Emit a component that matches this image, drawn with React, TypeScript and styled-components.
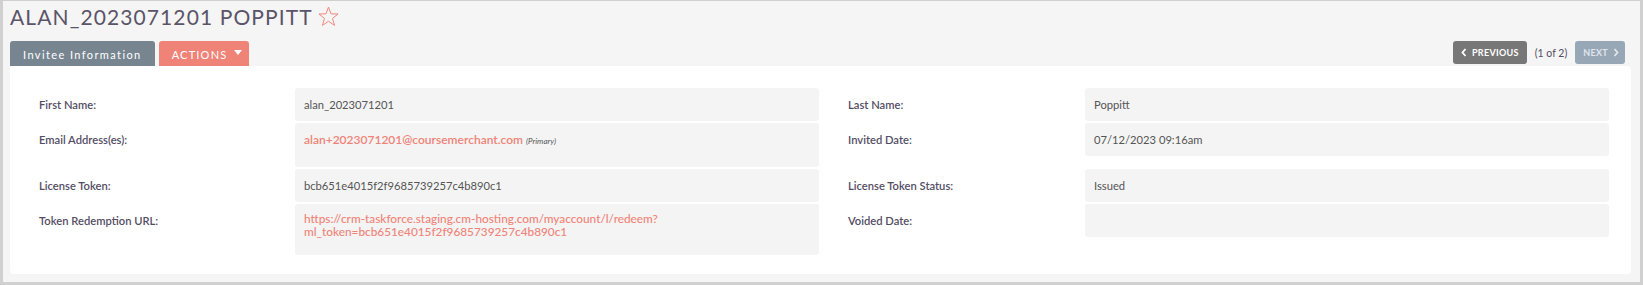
import React from "react";
import styled, { createGlobalStyle } from "styled-components";

const GlobalStyle = createGlobalStyle`
  html, body {
    margin: 0;
    padding: 0;
    background: #ffffff;
  }
  body {
    font-family: Lato, "Open Sans", sans-serif;
  }
`;

const Frame = styled.div`
  box-sizing: border-box;
  width: 1643px;
  height: 285px;
  background: #f5f5f5;
  border-style: solid;
  border-color: #d0d0d0;
  border-width: 1px 3px 3px 3px;
  padding: 3px 9px 0 7px;
`;

const Header = styled.div`
  display: flex;
  align-items: flex-start;
  gap: 4px;
  height: 37px;
`;

const Title = styled.h2`
  margin: 0;
  font-family: Lato, sans-serif;
  font-weight: 400;
  font-size: 21px;
  line-height: 26px;
  letter-spacing: 1.1px;
  color: #5a5468;
  text-transform: uppercase;
`;

const Star = styled.svg`
  width: 23px;
  height: 23px;
  margin-top: 1px;
`;

const TabBar = styled.div`
  display: flex;
  justify-content: space-between;
  align-items: flex-start;
  height: 25px;
`;

const Tabs = styled.div`
  display: flex;
  gap: 4px;
`;

const Tab = styled.div<{ $accent?: boolean }>`
  display: flex;
  align-items: center;
  gap: 7px;
  height: 25px;
  box-sizing: border-box;
  padding: 1px ${(p) => (p.$accent ? "7px" : "13px")} 0 13px;
  border-radius: 3px 3px 0 0;
  background: ${(p) => (p.$accent ? "#f08377" : "#778591")};
  color: #ffffff;
  font-size: 11px;
  font-weight: 400;
  letter-spacing: ${(p) => (p.$accent ? "1.2px" : "1.4px")};
  text-transform: ${(p) => (p.$accent ? "uppercase" : "none")};
`;

const Caret = styled.span`
  width: 0;
  height: 0;
  border-left: 4px solid transparent;
  border-right: 4px solid transparent;
  border-top: 5px solid #ffffff;
  margin-top: -3px;
`;

const Pager = styled.div`
  display: flex;
  align-items: center;
  gap: 8px;
  margin-right: 6px;
`;

const PageButton = styled.div<{ $disabled?: boolean }>`
  display: flex;
  align-items: center;
  gap: 5px;
  height: 23px;
  box-sizing: border-box;
  padding: 0 ${(p) => (p.$disabled ? "6px" : "8px")} 0 8px;
  border-radius: 3px;
  background: ${(p) => (p.$disabled ? "#98a7b6" : "#777777")};
  color: ${(p) => (p.$disabled ? "#dfe5eb" : "#ffffff")};
  font-size: 9px;
  font-weight: 700;
  letter-spacing: 0.3px;
  text-transform: uppercase;
`;

const PageCount = styled.span`
  font-size: 10.5px;
  color: #534d64;
`;

const Panel = styled.div`
  background: #ffffff;
  border-radius: 0 4px 4px 4px;
  height: 208px;
  box-sizing: border-box;
  padding: 22px 0 0 29px;
`;

const Row = styled.div`
  display: flex;
  align-items: flex-start;
  gap: 29px;
  margin-bottom: 2px;
`;

const Field = styled.div<{ $labelWidth: number; $valueWidth: number }>`
  display: grid;
  grid-template-columns: ${(p) => p.$labelWidth}px ${(p) => p.$valueWidth}px;
  align-items: start;
`;

const Label = styled.div`
  padding-top: 10px;
  font-size: 11.2px;
  line-height: 14px;
  font-weight: 600;
  color: #534d64;
`;

const Value = styled.div<{ $minHeight?: number; $tight?: boolean }>`
  box-sizing: border-box;
  min-height: ${(p) => p.$minHeight ?? 33}px;
  padding: ${(p) => (p.$tight ? "8px" : "10px")} 9px 9px;
  background: #f4f4f4;
  border-radius: 3px;
  font-size: 11.2px;
  line-height: ${(p) => (p.$tight ? "13px" : "14px")};
  color: #555555;
`;

const Link = styled.a<{ $bold?: boolean }>`
  color: #f08377;
  text-decoration: none;
  font-weight: ${(p) => (p.$bold ? 600 : 500)};
  font-size: ${(p) => (p.$bold ? "12px" : "11.8px")};
`;

const Note = styled.em`
  font-size: 8px;
  color: #555555;
  margin-left: 3px;
`;

const Chevron = ({ dir }: { dir: "left" | "right" }) => (
  <svg width="6" height="9" viewBox="0 0 6 9">
    <polyline
      points={dir === "left" ? "4.5,1 1.5,4.5 4.5,8" : "1.5,1 4.5,4.5 1.5,8"}
      fill="none"
      stroke="currentColor"
      strokeWidth="1.8"
    />
  </svg>
);

type Cell = { label: string; value: React.ReactNode; minHeight?: number; tight?: boolean };

function DetailRow({ left, right }: { left: Cell; right: Cell }) {
  return (
    <Row>
      <Field $labelWidth={256} $valueWidth={524}>
        <Label>{left.label}</Label>
        <Value $minHeight={left.minHeight} $tight={left.tight}>
          {left.value}
        </Value>
      </Field>
      <Field $labelWidth={237} $valueWidth={524}>
        <Label>{right.label}</Label>
        <Value $minHeight={right.minHeight} $tight={right.tight}>
          {right.value}
        </Value>
      </Field>
    </Row>
  );
}

export default function App() {
  return (
    <>
      <GlobalStyle />
      <Frame>
        <Header>
          <Title>alan_2023071201 Poppitt</Title>
          <Star viewBox="0 0 24 24">
            <polygon
              points="12,2.2 14.6,9.2 22,9.4 16.2,14 18.3,21.3 12,17 5.7,21.3 7.8,14 2,9.4 9.4,9.2"
              fill="none"
              stroke="#f08377"
              strokeWidth="1"
            />
          </Star>
        </Header>
        <TabBar>
          <Tabs>
            <Tab>Invitee Information</Tab>
            <Tab $accent>
              Actions
              <Caret />
            </Tab>
          </Tabs>
          <Pager>
            <PageButton>
              <Chevron dir="left" />
              Previous
            </PageButton>
            <PageCount>(1 of 2)</PageCount>
            <PageButton $disabled>
              Next
              <Chevron dir="right" />
            </PageButton>
          </Pager>
        </TabBar>
        <Panel>
          <DetailRow
            left={{ label: "First Name:", value: "alan_2023071201" }}
            right={{ label: "Last Name:", value: "Poppitt" }}
          />
          <DetailRow
            left={{
              label: "Email Address(es):",
              value: (
                <>
                  <Link $bold href="#">
                    alan+2023071201@coursemerchant.com
                  </Link>
                  <Note>(Primary)</Note>
                </>
              ),
              minHeight: 44,
            }}
            right={{ label: "Invited Date:", value: "07/12/2023 09:16am" }}
          />
          <DetailRow
            left={{ label: "License Token:", value: "bcb651e4015f2f9685739257c4b890c1" }}
            right={{ label: "License Token Status:", value: "Issued" }}
          />
          <DetailRow
            left={{
              label: "Token Redemption URL:",
              value: (
                <Link href="#">
                  https://crm-taskforce.staging.cm-hosting.com/myaccount/l/redeem?
                  <br />
                  ml_token=bcb651e4015f2f9685739257c4b890c1
                </Link>
              ),
              minHeight: 51,
              tight: true,
            }}
            right={{ label: "Voided Date:", value: "" }}
          />
        </Panel>
      </Frame>
    </>
  );
}
